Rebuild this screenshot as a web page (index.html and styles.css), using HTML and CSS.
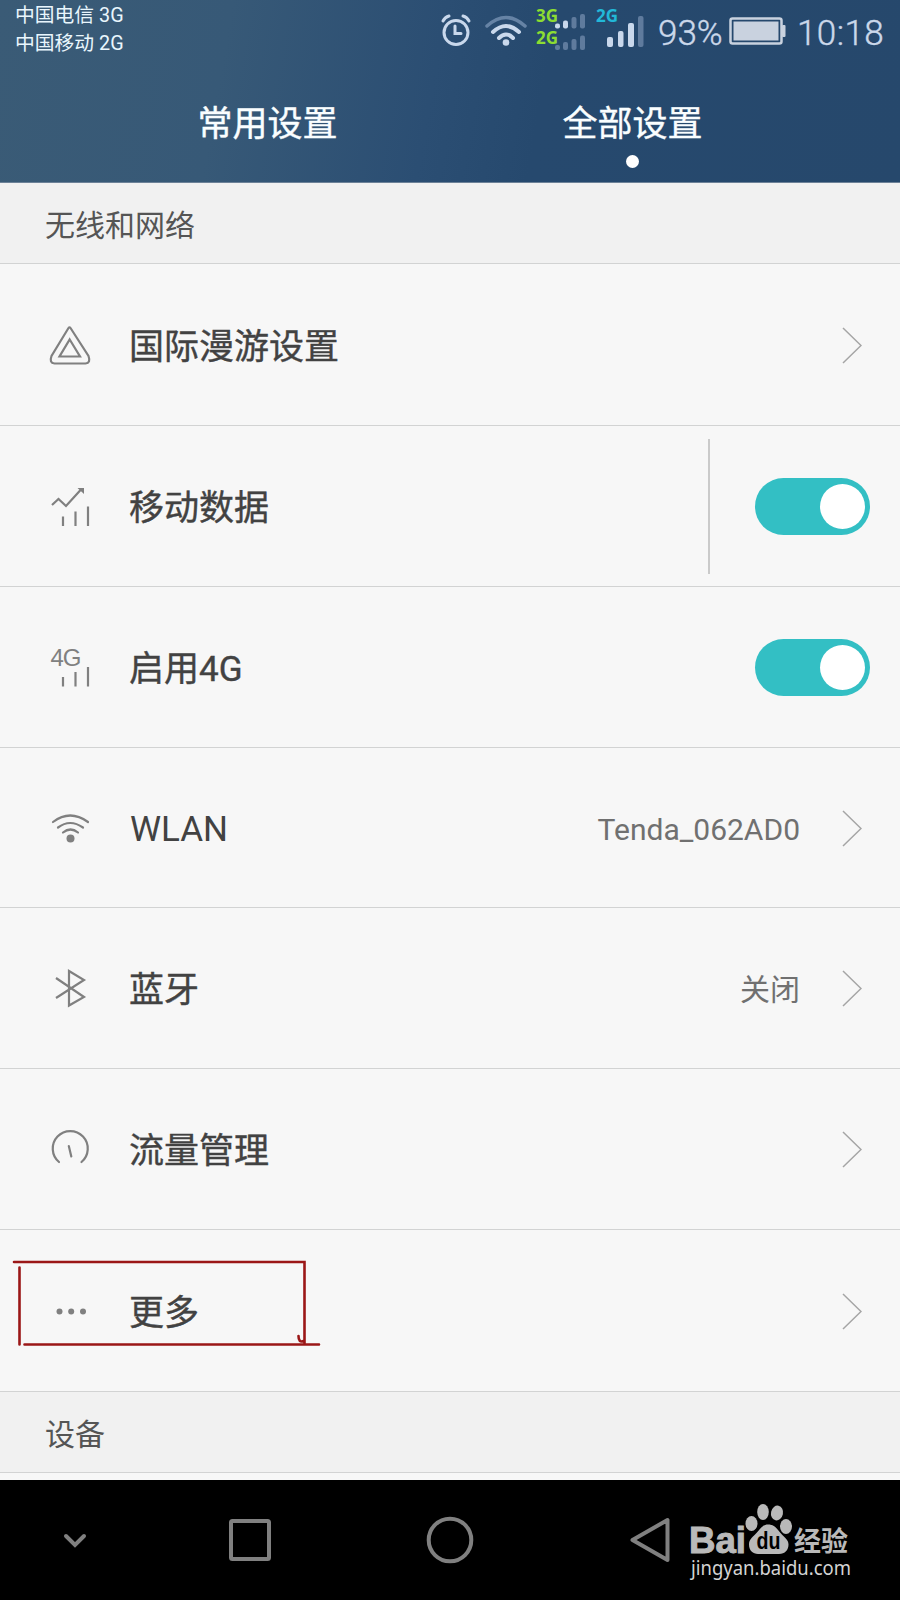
FILE: index.html
```html
<!DOCTYPE html>
<html lang="zh-CN">
<head>
  <meta charset="UTF-8" />
  <meta name="viewport" content="width=device-width, initial-scale=1.0"/>
  <title>全部设置</title>
  <link rel="stylesheet" href="styles.css">
</head>
<body>
  <header class="header">
    <div class="status-bar">
      <div class="carriers">
        <div>中国电信 3G</div>
        <div>中国移动 2G</div>
      </div>
      <!-- alarm, wifi, signals -->
      <svg class="status-icons" width="210" height="64" viewBox="440 0 210 64">
        <g fill="none" stroke="#c9d8ec" stroke-width="3" stroke-linecap="round">
          <circle cx="456" cy="32.5" r="12"/>
          <path d="M455 26v7.500h6M443 21q2-4 6-5M463 16q4 1 6 5"/>
          <path d="M487 26q19-17 38 0" stroke="#6683a5" stroke-width="3.500"/>
          <path d="M493 32q13-12 26 0M499 38q7-7 14 0" stroke-width="4"/>
        </g>
        <circle cx="506" cy="42.500" r="3.300" fill="#c9d8ec"/>
        <text class="net green" x="536" y="22" textLength="22">3G</text>
        <text class="net green" x="536" y="43.500" textLength="22">2G</text>
        <text class="net cyan" x="596" y="22" textLength="22">2G</text>
        <g fill="#c9d8ec">
          <rect x="555" y="23.500" width="5" height="5" rx="2"/>
          <rect x="563" y="20.500" width="5" height="8" rx="2"/>
          <rect x="607" y="37" width="6" height="10" rx="2"/>
          <rect x="618" y="31" width="5.500" height="16" rx="2"/>
          <rect x="628" y="23" width="6" height="24" rx="2"/>
        </g>
        <g fill="#5f7b9d">
          <rect x="571.500" y="17" width="5" height="11.500" rx="2"/>
          <rect x="580" y="14" width="5" height="14.500" rx="2"/>
          <rect x="555" y="45" width="5" height="5" rx="2"/>
          <rect x="563" y="42" width="5" height="8" rx="2"/>
          <rect x="571.500" y="39" width="5" height="11" rx="2"/>
          <rect x="580" y="35.500" width="5" height="14.500" rx="2"/>
          <rect x="638" y="16" width="5.500" height="31" rx="2"/>
        </g>
      </svg>
      <span class="battery-text">93%</span>
      <svg class="battery" width="58" height="30" viewBox="0 0 58 30">
        <rect x="1.500" y="2.500" width="51" height="25" rx="2" fill="none" stroke="#c9d2df" stroke-width="2.500"/>
        <rect x="4.500" y="5.500" width="45" height="19" fill="#c9d2df"/>
        <rect x="53" y="9" width="3.500" height="12" rx="1" fill="#c9d2df"/>
      </svg>
      <span class="clock">10:18</span>
    </div>
    <nav class="tabs">
      <div class="tab">常用设置</div>
      <div class="tab active">全部设置</div>
    </nav>
  </header>

  <h2 class="section-title">无线和网络</h2>
  <ul class="list">
    <li class="row">
      <svg class="icon" viewBox="0 0 50 50">
        <path d="M23.500 8q1-1.500 2 0L43.500 36q2.500 7-3 7.500H9.500q-5.500-.500-3-7.500z"/>
        <path d="M24.700 19.500L35 36.500H14.500z"/>
      </svg>
      <span class="label">国际漫游设置</span>
      <svg class="arrow" viewBox="0 0 20 38"><path d="M1 2l18 17.500L1 37"/></svg>
    </li>
    <li class="row">
      <svg class="icon" viewBox="0 0 50 50">
        <path d="M7 24l6.500-6 7.500 7L36 8.500M18 35.500V45M30.500 30.500V45M43 25.500V45"/>
        <path class="solid" d="M32.500 7H39v6z"/>
      </svg>
      <span class="label">移动数据</span>
      <span class="divider"></span>
      <span class="toggle"></span>
    </li>
    <li class="row">
      <svg class="icon" viewBox="0 0 50 50">
        <text class="icon-text" x="5.500" y="23.500" textLength="31">4G</text>
        <path d="M18 35V44.500M30.500 30V44.500M43 25V44.500"/>
      </svg>
      <span class="label">启用4G</span>
      <span class="toggle"></span>
    </li>
    <li class="row">
      <svg class="icon" viewBox="0 0 50 50">
        <path stroke-linecap="round" d="M8 19q17-13 35 0M13 24.500q12-9 25 0M18 29.500q7.500-6 15 0"/>
        <circle class="solid" cx="25.500" cy="35.500" r="4"/>
      </svg>
      <span class="label latin">WLAN</span>
      <span class="value latin">Tenda_062AD0</span>
      <svg class="arrow" viewBox="0 0 20 38"><path d="M1 2l18 17.500L1 37"/></svg>
    </li>
    <li class="row">
      <svg class="icon" viewBox="0 0 50 50">
        <path d="M11 15L39 34 24 42.500V8L39 17 11 35"/>
      </svg>
      <span class="label">蓝牙</span>
      <span class="value">关闭</span>
      <svg class="arrow" viewBox="0 0 20 38"><path d="M1 2l18 17.500L1 37"/></svg>
    </li>
    <li class="row">
      <svg class="icon" viewBox="0 0 50 50">
        <path stroke-linecap="round" d="M14 38a17.500 17.500 0 1 1 22.500 0M23.800 22l2.500 10.500"/>
      </svg>
      <span class="label">流量管理</span>
      <svg class="arrow" viewBox="0 0 20 38"><path d="M1 2l18 17.500L1 37"/></svg>
    </li>
    <li class="row">
      <svg class="icon" viewBox="0 0 50 50">
        <g class="solid">
          <circle cx="14.500" cy="25.500" r="3"/>
          <circle cx="26.200" cy="25.500" r="3"/>
          <circle cx="38" cy="25.500" r="3"/>
        </g>
      </svg>
      <span class="label">更多</span>
      <svg class="arrow" viewBox="0 0 20 38"><path d="M1 2l18 17.500L1 37"/></svg>
      <!-- hand drawn mark -->
      <svg class="mark" width="330" height="130" viewBox="0 0 330 130">
        <path d="M14 32H304.500V113M19.500 37.500V114.500M24.500 114.500H319M298.500 106q0 7 5 5"/>
      </svg>
    </li>
  </ul>
  <h2 class="section-title">设备</h2>

  <footer class="navbar">
    <svg viewBox="0 0 50 50"><path d="M16 21l9 9 9-9" stroke-linecap="round"/></svg>
    <svg viewBox="0 0 50 50"><rect x="6" y="6" width="38" height="38" rx="1.500"/></svg>
    <svg viewBox="0 0 50 50"><circle cx="25" cy="25" r="21.300"/></svg>
    <svg viewBox="0 0 50 50"><path stroke-linejoin="round" d="M7.500 25L42.500 5V45z"/></svg>
    <!-- watermark -->
    <svg class="watermark" width="170" height="80" viewBox="685 1500 170 80">
      <text class="wm-logo" x="689" y="1553" textLength="57" lengthAdjust="spacingAndGlyphs">Bai</text>
      <ellipse cx="751.500" cy="1523.500" rx="6" ry="7.500"/>
      <ellipse cx="763" cy="1512" rx="5.800" ry="8"/>
      <ellipse cx="777" cy="1513" rx="6" ry="7.500" transform="rotate(12 777 1513)"/>
      <ellipse cx="786" cy="1526.500" rx="6" ry="7.500"/>
      <path d="M768 1524.500c-6 0-8 5-12 9s-7 6-7 11c0 6 4 9.500 9 9.500h21c6 0 9.500-4 9.500-9.500 0-5-4-7-7.500-11s-6-9-13-9z"/>
      <text class="wm-du" x="756.500" y="1549" textLength="24" lengthAdjust="spacingAndGlyphs">du</text>
      <text class="wm-cn" x="794" y="1550.500" textLength="54">经验</text>
      <text class="wm-url" x="691" y="1574.500" textLength="160" lengthAdjust="spacingAndGlyphs">jingyan.baidu.com</text>
    </svg>
  </footer>
</body>
</html>
```
FILE: styles.css
```css
:root {
  --bg: #f7f7f7;
  --text: #424242;
  --muted: #707070;
  --line: #d2d3d3;
  --accent: #33bfc4;
}

* {
  box-sizing: border-box;
}

body {
  margin: 0;
  width: 900px;
  height: 1600px;
  display: flex;
  flex-direction: column;
  overflow: hidden;
  font-family: Roboto, "Noto Sans CJK SC", sans-serif;
  background-color: var(--bg);
  color: var(--text);
}

/* Header */
.header {
  height: 183px;
  flex: none;
  background: linear-gradient(100deg, #3a5b76 0%, #375977 25%, #2b4e73 48%, #26496e 60%, #26486c 100%);
  border-bottom: 1px solid #6d8298;
  color: #fafeff;
}

.status-bar {
  height: 64px;
  display: flex;
  padding-left: 15px;
  color: #cbd8ea;
}

.carriers {
  width: 425px;
  padding-top: 2px;
  font-size: 19.8px;
  line-height: 27.5px;
  color: #e9f6fd;
}

.net {
  font: bold 17px "Noto Sans", sans-serif;
}

.green {
  fill: #8cdc32;
}

.cyan {
  fill: #22b8d8;
}

.battery-text,
.clock {
  font-size: 35px;
  font-weight: 300;
  line-height: 67px;
  -webkit-text-stroke: 0.4px #cbd8ea;
}

.battery-text {
  width: 79px;
  padding-left: 8px;
}

.battery {
  margin-top: 16px;
}

.clock {
  margin-left: 10px;
  letter-spacing: 0.4px;
}

.tabs {
  display: flex;
  justify-content: center;
  padding-top: 35px;
}

.tab {
  width: 365px;
  font-size: 35px;
  line-height: 52px;
  text-align: center;
  -webkit-text-stroke: 0.4px #fafeff;
}

.tab.active::after {
  content: "";
  display: block;
  width: 13px;
  height: 13px;
  margin: 4px auto 0;
  border-radius: 50%;
  background-color: white;
}

/* Settings list */
.section-title {
  height: 81px;
  flex: none;
  margin: 0;
  padding-left: 45px;
  border-bottom: 1px solid var(--line);
  background-color: #f1f1f1;
  color: #555;
  font-size: 30px;
  font-weight: normal;
  line-height: 86px;
}

.list {
  height: 1128px;
  flex: none;
  display: grid;
  grid-template-rows: 162px 161px 161px 160px 161px 161px 162px;
  margin: 0;
  padding: 0;
  list-style: none;
}

.row {
  position: relative;
  display: flex;
  align-items: center;
  padding: 0 38px 0 45px;
  border-bottom: 1px solid var(--line);
}

.icon {
  width: 50px;
  height: 50px;
  margin-right: 34px;
  fill: none;
  stroke: #808080;
  stroke-width: 2.2;
}

.solid {
  fill: #808080;
  stroke: none;
}

.icon-text {
  font-family: "Liberation Sans", sans-serif;
  font-size: 24px;
  fill: #808080;
  stroke: none;
}

.label {
  flex: 1;
  padding-bottom: 3px;
  font-size: 35px;
  -webkit-text-stroke: 0.4px var(--text);
}

.value {
  margin-right: 42px;
  padding-bottom: 2px;
  font-size: 30px;
  color: var(--muted);
}

.latin {
  padding: 4px 0 0;
  -webkit-text-stroke: 0;
}

.label.latin {
  padding-left: 1px;
}

.arrow {
  width: 20px;
  height: 38px;
  fill: none;
  stroke: #a5a5a5;
  stroke-width: 1.5;
}

.divider {
  width: 2px;
  height: 135px;
  margin-right: 45px;
  background-color: #cacaca;
}

.toggle {
  width: 115px;
  height: 57px;
  margin-right: -8px;
  padding: 6px 5px;
  border-radius: 29px;
  background-color: var(--accent);
}

.toggle::after {
  content: "";
  display: block;
  width: 45px;
  height: 45px;
  margin-left: auto;
  border-radius: 50%;
  background-color: white;
}

.mark {
  position: absolute;
  top: 0;
  left: 0;
  fill: none;
  stroke: #9b1717;
  stroke-width: 2.6;
  stroke-linecap: round;
}

/* Bottom navigation */
.navbar {
  position: relative;
  height: 120px;
  flex: none;
  display: grid;
  grid-template-columns: 150px 200px 200px 200px 150px;
  place-items: center;
  margin-top: 7px;
  background-color: black;
}

.navbar > svg {
  width: 50px;
  height: 50px;
  fill: none;
  stroke: #808080;
  stroke-width: 4;
}

.navbar > .watermark {
  position: absolute;
  top: 20px;
  left: 685px;
  width: 170px;
  height: 80px;
  overflow: visible;
  fill: #b9b9b9;
  stroke: none;
}

.wm-logo {
  font: bold 36px "Liberation Sans", sans-serif;
  stroke: #b9b9b9;
  stroke-width: 1;
}

.wm-du {
  font: bold 23px "Liberation Sans", sans-serif;
  fill: black;
}

.wm-cn {
  font: bold 27px "Noto Sans CJK SC", sans-serif;
}

.wm-url {
  font: 20px "Noto Sans", sans-serif;
  fill: #d4d4d4;
}
```
